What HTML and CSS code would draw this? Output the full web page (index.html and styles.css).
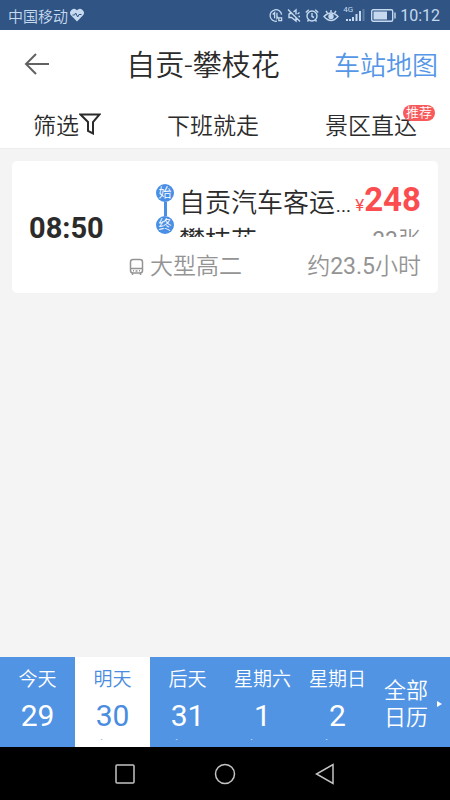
FILE: index.html
```
<!DOCTYPE html>
<html lang="zh-CN">
<head>
<meta charset="utf-8">
<meta name="viewport" content="width=device-width, initial-scale=1">
<title>自贡-攀枝花</title>
<link rel="stylesheet" href="styles.css">
</head>
<body>
<div class="status">
  <span class="carrier">中国移动</span>
  <svg class="heart" width="14" height="14" viewBox="0 0 14 14"><path fill="currentColor" d="M7 13.500 1.200 7.400A3.800 3.800 0 0 1 7 2.200a3.800 3.800 0 0 1 5.800 5.200z"/><path fill="none" stroke="#305585" stroke-width="1" d="M2.500 7h2l1.200-2 2 4 1.300-2.500h2.500"/></svg>
  <div class="indicators">
    <svg width="14" height="15" viewBox="0 0 15 15"><path d="M13.500 6.500A6.200 6.200 0 1 0 8.500 13.600M4 6.500 6 4.500V10.500M8.500 4.500V10.500L10 9"/><path d="M10.500 10h3v3h-3z"/></svg>
    <svg width="14" height="15" viewBox="0 0 14 15"><path d="M1 1.500 13 13.500M2 5.500h2.500M2 5.500v4h2.500l4.500 3.500V9.500M6.500 4 9 2v4.500M10.500 6l2-1.500M11.500 8.500H13"/></svg>
    <svg width="14" height="15" viewBox="0 0 14 15"><circle cx="7" cy="8" r="5"/><path d="M7 5v3.500l2 1M.8 4.500 3.800 1.800M13.200 4.500l-3-2.700M3.500 12l-1 1.500M10.500 12l1 1.500"/></svg>
    <svg width="16" height="15" viewBox="0 0 16 15"><path d="M1 8.500q7-7 14 0q-7 8-14 0zM8 2v2.500M3 3l1.500 2M13 3l-1.500 2"/><circle cx="8" cy="8.500" r="2" fill="currentColor"/></svg>
    <div class="signal"><span class="network">4G</span><svg width="22" height="15" viewBox="0 0 22 15"><path class="bar" d="M4 13v-2M7 13v-2M10 13V9M13.500 13V6M17 13V3"/><path class="bar dim" d="M20.500 13V1"/></svg></div>
    <svg class="battery" width="25" height="13" viewBox="0 0 25 13"><rect x=".7" y=".7" width="21" height="11.600" rx="1.500"/><path fill="currentColor" stroke="none" d="M2.500 2.500h13.500v8h-13.500z"/><path d="M24 3.500v6"/></svg>
    <span class="clock">10:12</span>
  </div>
</div>
<header class="header">
  <button class="back" aria-label="返回"><svg width="26" height="22" viewBox="0 0 26 22"><path d="M25 11H2M12 1 2 11l10 10"/></svg></button>
  <h1 class="title">自贡-攀枝花</h1>
  <a class="map" href="#">车站地图</a>
</header>
<nav class="filters">
  <button class="filter">筛选<svg width="22" height="22" viewBox="0 0 22 22"><path d="M1.500 1.500h19L14 9v11.500l-5-2.500V9z"/></svg></button>
  <button class="filter">下班就走</button>
  <button class="filter">景区直达<span class="badge">推荐</span></button>
</nav>
<main class="results">
  <article class="trip">
    <time class="depart">08:50</time>
    <div class="route"><span class="stop">始</span><span class="track"></span><span class="stop">终</span></div>
    <div class="ends">
      <div class="line"><span class="station">自贡汽车客运总站</span><strong class="price"><small class="yen">¥</small>248</strong></div>
      <div class="line second"><span class="station">攀枝花</span><span class="seats"><span class="figure">33</span>张</span></div>
    </div>
    <div class="info">
      <svg width="15" height="18" viewBox="0 0 15 18"><rect x="1.500" y="1.500" width="12" height="13.500" rx="2.500"/><path d="M1.500 10.500h12M3.500 15v2M11.500 15v2M4 12.800h1M10 12.800h1M6.500 13h2"/></svg>
      <span>大型高二</span><span class="duration">约<span class="figure">23.5</span>小时</span>
    </div>
  </article>
</main>
<nav class="dates">
  <button class="date"><span class="day">今天</span><span class="num">29</span><span class="stock">无票</span></button>
  <button class="date current"><span class="day">明天</span><span class="num">30</span><span class="stock">有票</span></button>
  <button class="date"><span class="day">后天</span><span class="num">31</span><span class="stock">有票</span></button>
  <button class="date"><span class="day">星期六</span><span class="num">1</span><span class="stock">有票</span></button>
  <button class="date"><span class="day">星期日</span><span class="num">2</span><span class="stock">有票</span></button>
  <button class="all"><span>全部<br>日历</span><svg width="5" height="6" viewBox="0 0 5 6"><path fill="currentColor" d="M0 0 5 3 0 6z"/></svg></button>
</nav>
<footer class="system">
  <button aria-label="最近任务"><svg width="22" height="22" viewBox="0 0 22 22"><rect x="2" y="2" width="18" height="18" rx="1"/></svg></button>
  <button aria-label="主页"><svg width="22" height="22" viewBox="0 0 22 22"><circle cx="11" cy="11" r="9.500"/></svg></button>
  <button aria-label="返回上一级"><svg width="22" height="22" viewBox="0 0 22 22"><path d="M19 1.500v19L2.500 11z"/></svg></button>
</footer>
</body>
</html>
```
FILE: styles.css
```
* { box-sizing: border-box; }
body {
  margin: 0;
  min-height: 100vh;
  display: flex;
  flex-direction: column;
  background: #f4f4f4;
  color: #2b2b2b;
  font-family: Roboto, "Noto Sans CJK SC", sans-serif;
  font-weight: 350;
}
button {
  margin: 0;
  padding: 0;
  border: 0;
  background: none;
  color: inherit;
  font: inherit;
}
svg { display: block; flex: none; fill: none; stroke: currentColor; stroke-width: 2; }

.status {
  height: 30px;
  padding: 0 10px 0 8px;
  display: flex;
  align-items: center;
  background: #305585;
  color: #c6d9ee;
  font-size: 15px;
}
.status svg { stroke-width: 1.4; }
.status .heart { margin-left: 2px; stroke: none; }
.indicators { margin-left: auto; display: flex; align-items: center; gap: 4px; }
.signal { position: relative; }
.network { position: absolute; top: -2px; left: 0; font-size: 8px; line-height: 8px; font-weight: 400; }
.status .bar { stroke-width: 2; }
.dim { opacity: .3; }
.battery { margin-left: 2px; }
.clock { font-size: 16px; font-weight: 400; }
.figure { font-weight: 400; }

.header {
  height: 60px;
  padding: 12px 12px 0;
  display: flex;
  align-items: center;
  background: #fff;
}
.back { width: 60px; height: 48px; padding: 0 0 4px 12px; color: #626262; }
.title { flex: 1; margin: 0; text-align: center; font-size: 29px; line-height: 40px; font-weight: 350; }
.map { color: #5596e6; font-size: 26px; line-height: 40px; text-decoration: none; }

.filters {
  height: 59px;
  padding: 16px 33px 0;
  display: flex;
  justify-content: space-between;
  align-items: center;
  background: #fff;
  border-bottom: 1px solid #eee;
  font-size: 23px;
}
.filter { position: relative; display: flex; align-items: center; line-height: 32px; }
.filter svg { margin-bottom: 6px; }
.badge {
  position: absolute;
  top: -6px;
  right: -18px;
  width: 32px;
  border-radius: 8px;
  background: #f85a5c;
  color: #fff;
  font-size: 13px;
  line-height: 16px;
  text-align: center;
}

.results { flex: 1; padding: 12px; }
.trip {
  padding: 20px 17px 8px;
  display: grid;
  grid-template-columns: 102px 48px 1fr;
  background: #fff;
  border-radius: 5px;
}
.depart { grid-row: 1 / 3; align-self: center; padding-bottom: 10px; font-size: 29px; line-height: 36px; font-weight: 700; }
.route { padding: 3px 0 0 20px; display: flex; flex-direction: column; align-items: center; }
.stop {
  width: 18px;
  height: 18px;
  border-radius: 50%;
  background: #4a8fe6;
  color: #fff;
  font-size: 13px;
  line-height: 18px;
  text-align: center;
}
.track { width: 3px; height: 14px; background: #4a8fe6; }
.ends { height: 56px; overflow: hidden; min-width: 0; }
.line { display: flex; align-items: center; line-height: 38px; font-size: 26px; }
.station { flex: 1; overflow: hidden; text-overflow: ellipsis; white-space: nowrap; }
.price { color: #fb4d50; font-size: 33px; font-weight: 700; }
.yen { font-size: 17px; font-weight: 400; }
.second { line-height: 34px; }
.second .station { overflow: visible; }
.seats { color: #8f8f8f; font-size: 23px; }
.info {
  grid-column: 2 / 4;
  margin-left: -2px;
  padding-top: 12px;
  display: flex;
  align-items: center;
  gap: 6px;
  color: #949494;
  font-size: 23px;
  line-height: 36px;
}
.info svg { stroke-width: 1.5; }
.duration { margin-left: auto; }

.dates { height: 90px; display: grid; grid-template-columns: repeat(6, 1fr); background: #5294e4; color: #fff; }
.date {
  height: 83px;
  padding-top: 8px;
  overflow: hidden;
  display: flex;
  flex-direction: column;
  align-items: center;
}
.date.current { height: 90px; border-bottom: 7px solid #fff; background: #fff; color: #4a8ce0; }
.day { font-size: 19px; line-height: 30px; }
.num { font-size: 30px; line-height: 42px; font-weight: 400; }
.stock { flex: none; font-size: 19px; line-height: 26px; }
.all { padding: 4px 8px 0 9px; display: flex; align-items: center; justify-content: space-between; font-size: 22px; line-height: 27px; }
.all svg { stroke: none; }

.system { height: 53px; display: flex; justify-content: center; align-items: center; gap: 78px; background: #000; color: #c4c4c4; }
.system svg { stroke-width: 1.5; }
```
